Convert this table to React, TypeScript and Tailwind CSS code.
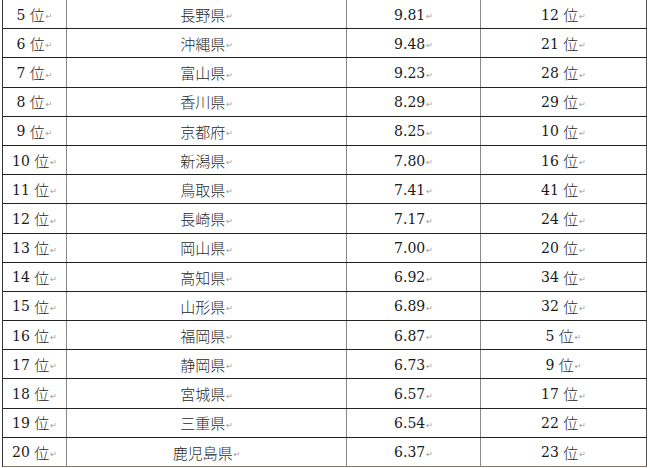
const rows = [
  ['5', '長野県', '9.81', '12'],
  ['6', '沖縄県', '9.48', '21'],
  ['7', '富山県', '9.23', '28'],
  ['8', '香川県', '8.29', '29'],
  ['9', '京都府', '8.25', '10'],
  ['10', '新潟県', '7.80', '16'],
  ['11', '鳥取県', '7.41', '41'],
  ['12', '長崎県', '7.17', '24'],
  ['13', '岡山県', '7.00', '20'],
  ['14', '高知県', '6.92', '34'],
  ['15', '山形県', '6.89', '32'],
  ['16', '福岡県', '6.87', '5'],
  ['17', '静岡県', '6.73', '9'],
  ['18', '宮城県', '6.57', '17'],
  ['19', '三重県', '6.54', '22'],
  ['20', '鹿児島県', '6.37', '23'],
]

function Mark() {
  return <span className="ml-[1px] self-end pb-[7px] text-[8px] leading-none text-[#9a9a9a] [font-family:'DejaVu_Sans',sans-serif]">↵</span>
}

function Cell({ children, className = '' }: { children: React.ReactNode; className?: string }) {
  return (
    <div className={'flex h-full items-center justify-center border-r border-[#8a8a8a] pt-[2px] ' + className}>
      <span className="flex h-full items-center">{children}</span>
      <Mark />
    </div>
  )
}

const jp = "text-[15px] font-light text-[#2a2a2a] [font-family:'Noto_Sans_CJK_JP',sans-serif]"

export default function App() {
  return (
    <div className="h-[468px] w-[650px] overflow-hidden bg-white text-[14px] text-[#1a1a1a] [font-family:'DejaVu_Serif','Noto_Sans_CJK_JP',serif]">
      <div className="ml-[2px] w-[645px] border-l border-[#333]">
        {rows.map(([rank, name, value, prev], i) => (
          <div
            key={rank}
            className={
              'grid h-[29.2px] grid-cols-[64px_280px_134px_166px] border-b ' +
              (i === rows.length - 1 ? 'border-[#8a7866]' : 'border-[#222]')
            }
          >
            <Cell>
              {rank}&nbsp;<span className={jp}>位</span>
            </Cell>
            <Cell>
              <span className={jp}>{name}</span>
            </Cell>
            <Cell>{value}</Cell>
            <Cell className="border-[#555]">
              {prev}&nbsp;<span className={jp}>位</span>
            </Cell>
          </div>
        ))}
      </div>
    </div>
  )
}
